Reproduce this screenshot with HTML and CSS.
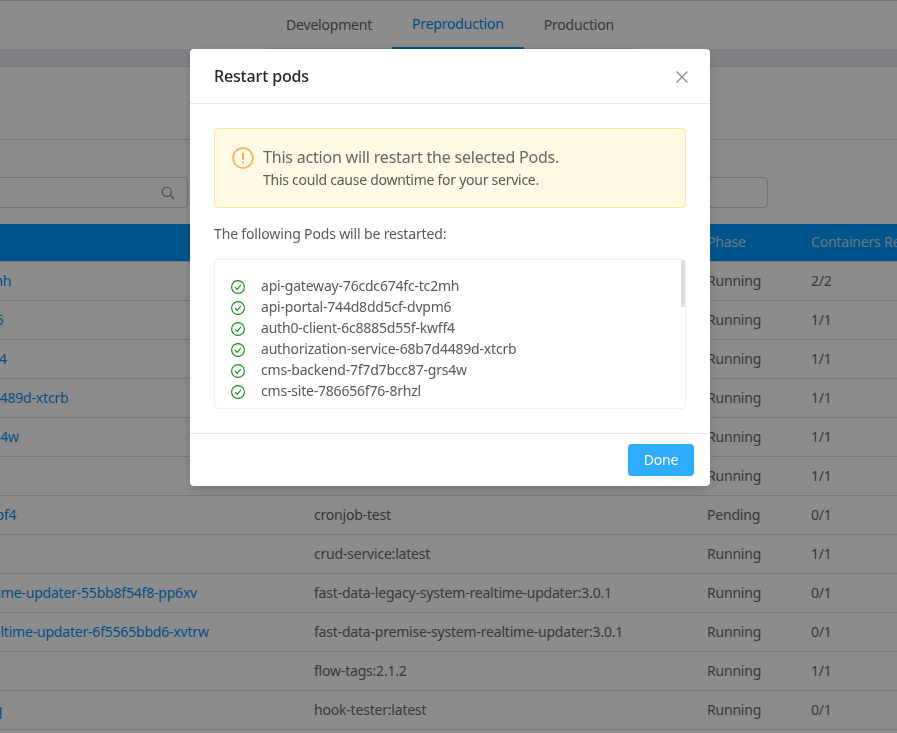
FILE: index.html
```html
<!DOCTYPE html>
<html lang="en">
<head>
<meta charset="utf-8">
<title>Restart pods</title>
<link rel="stylesheet" href="styles.css">
</head>
<body>
<div class="page">
  <nav class="tabs">
    <a class="tab">Development</a>
    <a class="tab tab-active">Preproduction</a>
    <a class="tab">Production</a>
  </nav>
  <div class="band"></div>
  <div class="title-area"></div>
  <div class="filters">
    <div class="input input-search">
      <svg class="search-icon" viewBox="0 0 14 14" fill="none" stroke="currentColor"><circle cx="5.8" cy="5.8" r="4.6" stroke-width="1.1"/><path d="M9.2 9.2l3.8 3.8" stroke-width="1.2"/></svg>
    </div>
    <div class="input input-select"></div>
  </div>
  <div class="table">
    <div class="row row-head"><span></span><span></span><span>Phase</span><span>Containers Ready</span></div>
    <div class="row"><a>api-gateway-76cdc674fc-tc2mh</a><span></span><span>Running</span><span>2/2</span></div>
    <div class="row"><a>api-portal-744d8dd5cf-dvpm6</a><span></span><span>Running</span><span>1/1</span></div>
    <div class="row"><a>auth0-client-6c8885d55f-kwff4</a><span></span><span>Running</span><span>1/1</span></div>
    <div class="row"><a>authorization-service-68b7d4489d-xtcrb</a><span></span><span>Running</span><span>1/1</span></div>
    <div class="row"><a>cms-backend-7f7d7bcc87-grs4w</a><span></span><span>Running</span><span>1/1</span></div>
    <div class="row"><a>cms-site-786656f76-8rhzl</a><span></span><span>Running</span><span>1/1</span></div>
    <div class="row"><a>cronjob-test-27d5f6c9b48-xxpf4</a><span>cronjob-test</span><span>Pending</span><span>0/1</span></div>
    <div class="row"><a>crud-service-55c7d9f6b84-tzv</a><span>crud-service:latest</span><span>Running</span><span>1/1</span></div>
    <div class="row"><a>fast-data-legacy-system-realtime-updater-55bb8f54f8-pp6xv</a><span>fast-data-legacy-system-realtime-updater:3.0.1</span><span>Running</span><span>0/1</span></div>
    <div class="row"><a>fast-data-premise-system-realtime-updater-6f5565bbd6-xvtrw</a><span>fast-data-premise-system-realtime-updater:3.0.1</span><span>Running</span><span>0/1</span></div>
    <div class="row"><a>flow-tags-6d8f7c5</a><span>flow-tags:2.1.2</span><span>Running</span><span>1/1</span></div>
    <div class="row"><a>hook-tester-7b9c6d54f8d-4kq</a><span>hook-tester:latest</span><span>Running</span><span>0/1</span></div>
    <div class="row"></div>
  </div>
</div>
<div class="overlay"></div>
<div class="modal-wrap">
  <section class="modal">
    <header class="modal-head">
      <h2>Restart pods</h2>
      <svg class="close" viewBox="0 0 12 12" fill="none" stroke="currentColor" stroke-width="1.1"><path d="M.5.5l11 11M11.5.5l-11 11"/></svg>
    </header>
    <div class="modal-body">
      <div class="alert">
        <svg class="alert-icon" viewBox="0 0 22 22" fill="none" stroke="#ffa940"><circle cx="11" cy="11" r="9.9" stroke-width="1.5"/><path d="M11 5.8v7" stroke-width="1.9"/><path d="M11 14.6v1.9" stroke-width="1.9"/></svg>
        <div>
          <div class="alert-title">This action will restart the selected Pods.</div>
          <div class="alert-sub">This could cause downtime for your service.</div>
        </div>
      </div>
      <p class="lead">The following Pods will be restarted:</p>
      <div class="pods">
        <div class="pod"><svg class="ok" viewBox="0 0 14 14" fill="none" stroke="#128a12"><circle cx="7" cy="7" r="6.4" stroke-width="1.1"/><path d="M4.1 7.2l2.1 2.2 3.7-4.4" stroke-width="1.1"/></svg><span>api-gateway-76cdc674fc-tc2mh</span></div>
        <div class="pod"><svg class="ok" viewBox="0 0 14 14" fill="none" stroke="#128a12"><circle cx="7" cy="7" r="6.4" stroke-width="1.1"/><path d="M4.1 7.2l2.1 2.2 3.7-4.4" stroke-width="1.1"/></svg><span>api-portal-744d8dd5cf-dvpm6</span></div>
        <div class="pod"><svg class="ok" viewBox="0 0 14 14" fill="none" stroke="#128a12"><circle cx="7" cy="7" r="6.4" stroke-width="1.1"/><path d="M4.1 7.2l2.1 2.2 3.7-4.4" stroke-width="1.1"/></svg><span>auth0-client-6c8885d55f-kwff4</span></div>
        <div class="pod"><svg class="ok" viewBox="0 0 14 14" fill="none" stroke="#128a12"><circle cx="7" cy="7" r="6.4" stroke-width="1.1"/><path d="M4.1 7.2l2.1 2.2 3.7-4.4" stroke-width="1.1"/></svg><span>authorization-service-68b7d4489d-xtcrb</span></div>
        <div class="pod"><svg class="ok" viewBox="0 0 14 14" fill="none" stroke="#128a12"><circle cx="7" cy="7" r="6.4" stroke-width="1.1"/><path d="M4.1 7.2l2.1 2.2 3.7-4.4" stroke-width="1.1"/></svg><span>cms-backend-7f7d7bcc87-grs4w</span></div>
        <div class="pod"><svg class="ok" viewBox="0 0 14 14" fill="none" stroke="#128a12"><circle cx="7" cy="7" r="6.4" stroke-width="1.1"/><path d="M4.1 7.2l2.1 2.2 3.7-4.4" stroke-width="1.1"/></svg><span>cms-site-786656f76-8rhzl</span></div>
        <div class="scrollbar"></div>
      </div>
    </div>
    <footer class="modal-foot"><button class="done">Done</button></footer>
  </section>
</div>
</body>
</html>
```
FILE: styles.css
```css
* { box-sizing: border-box; }
html, body { margin: 0; height: 100%; overflow: hidden; background: #fff; }
body { font: 14px/21px "Noto Sans", sans-serif; color: #595959; letter-spacing: -0.2px; }

.page { height: 733px; overflow: hidden; border-top: 1px solid #d9d9d9; }

.tabs { display: flex; justify-content: center; height: 48px; border-bottom: 1px solid #e8e8e8; width: 368px; margin: 0 auto 0 266px; }
.tab { display: flex; align-items: center; justify-content: center; height: 48px; padding: 0 20px 2px; color: #666; white-space: nowrap; }
.tab-active { color: #0a84e0; border-bottom: 2px solid #009aff; }

.band { height: 18px; background: #e9ecf1; border-bottom: 1px solid #dedede; }
.title-area { height: 73px; border-bottom: 1px solid #dedede; }

.filters { display: flex; justify-content: space-between; height: 84px; padding: 37px 129px 16px 0; }
.input { height: 31px; border: 1px solid #cfcfcf; border-radius: 4px; display: flex; align-items: center; justify-content: flex-end; }
.input-search { width: 238px; margin-left: -50px; padding-right: 12px; color: #808080; }
.input-select { width: 300px; }
.search-icon { width: 14px; height: 14px; }

.table { margin-left: -187px; width: 1300px; }
.row { display: grid; grid-template-columns: 501px 393px 104px 1fr; height: 39px; padding-bottom: 2px; align-items: center; border-bottom: 1px solid #dedede; white-space: nowrap; color: #666; }
.row a { color: #0a8dee; }
.row-head { height: 38px; background: #009aff; color: #c2dcf0; border-bottom: 1px solid #dedede; }

.overlay { position: fixed; inset: 0; background: rgba(0, 0, 0, .45); }

.modal-wrap { position: fixed; inset: 0; display: flex; justify-content: center; align-items: flex-start; padding: 49px 0 0 3px; }
.modal { width: 520px; height: 437px; background: #fff; border-radius: 4px; box-shadow: 0 4px 12px rgba(0, 0, 0, .15); display: flex; flex-direction: column; }
.modal-head { height: 55px; flex: none; display: flex; align-items: center; justify-content: space-between; padding: 0 22px 0 24px; border-bottom: 1px solid #e8e8e8; }
.modal-head h2 { margin: 0; font-size: 16px; font-weight: 500; line-height: 22px; color: #262626; letter-spacing: -0.15px; }
.close { width: 12px; height: 12px; color: #858585; margin-top: 2px; }

.modal-body { flex: 1; padding: 24px 24px 0; border-bottom: 1px solid #e8e8e8; }
.alert { height: 80px; display: flex; align-items: flex-start; gap: 9px; padding: 16px 17px; background: #fff9e6; border: 1px solid #ffe58f; border-radius: 4px; }
.alert-icon { width: 22px; height: 22px; flex: none; margin-top: 2px; }
.alert-title { font-size: 16px; line-height: 24px; color: #666; }
.alert-sub { font-size: 14px; line-height: 22px; color: #595959; letter-spacing: -0.26px; }
.lead { margin: 15px 0 14px; line-height: 22px; color: #595959; letter-spacing: -0.15px; }

.pods { position: relative; height: 150px; padding: 15px 16px 0; border: 1px solid #f0f0f0; border-radius: 4px; }
.pod { display: flex; align-items: center; gap: 16px; height: 21px; color: #595959; }
.ok { width: 14px; height: 14px; flex: none; margin-top: 2px; }
.scrollbar { position: absolute; top: 0; right: 0; width: 4px; height: 47px; background: #ddd; }

.modal-foot { height: 52px; flex: none; display: flex; justify-content: flex-end; align-items: center; padding-right: 16px; }
.done { width: 66px; height: 32px; padding: 0 0 2px; border: 0; border-radius: 4px; background: #2eaaff; color: #fff; font: inherit; letter-spacing: inherit; }
```
